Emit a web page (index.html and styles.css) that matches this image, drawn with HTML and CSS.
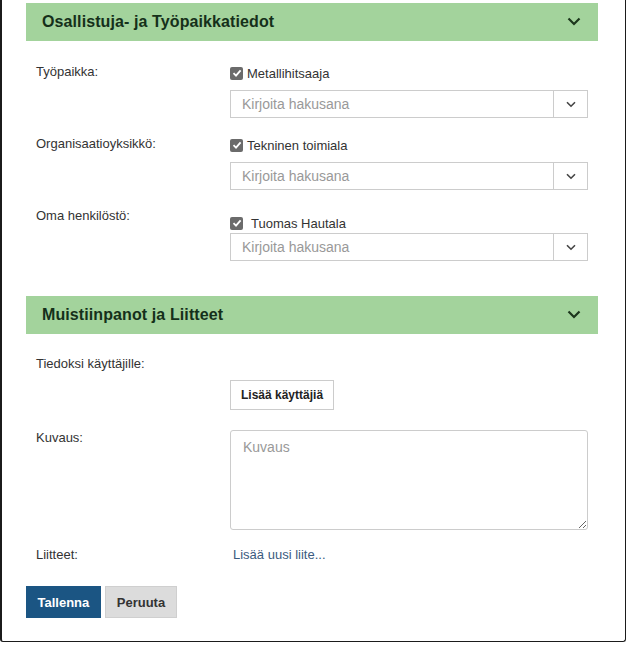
FILE: index.html
```html
<!DOCTYPE html>
<html lang="fi">
<head>
<meta charset="utf-8">
<title>Lomake</title>
<link rel="stylesheet" href="styles.css">
</head>
<body>
<div class="modal">
  <div class="section-head">
    <h2>Osallistuja- ja Työpaikkatiedot</h2>
    <svg class="chev" width="14" height="9" viewBox="0 0 14 9"><path d="M1.5 1.5 L7 7 L12.5 1.5" fill="none" stroke="#1c361c" stroke-width="2.2"/></svg>
  </div>

  <div class="rows first">
    <div class="row">
      <div class="label lbl-check">Työpaikka:</div>
      <div class="field">
        <div class="checkline"><span class="cb"><svg width="12" height="12" viewBox="0 0 12 12"><path d="M2.5 6.2 L5 8.6 L9.6 3.4" fill="none" stroke="#fff" stroke-width="1.8"/></svg></span>Metallihitsaaja</div>
        <div class="select"><span class="ph">Kirjoita hakusana</span><span class="dd"><svg width="10" height="7" viewBox="0 0 10 7"><path d="M1 1.2 L5 5.2 L9 1.2" fill="none" stroke="#444" stroke-width="1.6"/></svg></span></div>
      </div>
    </div>
    <div class="row">
      <div class="label lbl-check">Organisaatioyksikkö:</div>
      <div class="field">
        <div class="checkline"><span class="cb"><svg width="12" height="12" viewBox="0 0 12 12"><path d="M2.5 6.2 L5 8.6 L9.6 3.4" fill="none" stroke="#fff" stroke-width="1.8"/></svg></span>Tekninen toimiala</div>
        <div class="select"><span class="ph">Kirjoita hakusana</span><span class="dd"><svg width="10" height="7" viewBox="0 0 10 7"><path d="M1 1.2 L5 5.2 L9 1.2" fill="none" stroke="#444" stroke-width="1.6"/></svg></span></div>
      </div>
    </div>
    <div class="row">
      <div class="label lbl-check">Oma henkilöstö:</div>
      <div class="field">
        <div class="checkline user"><span class="cb"><svg width="12" height="12" viewBox="0 0 12 12"><path d="M2.5 6.2 L5 8.6 L9.6 3.4" fill="none" stroke="#fff" stroke-width="1.8"/></svg></span>Tuomas Hautala</div>
        <div class="select"><span class="ph">Kirjoita hakusana</span><span class="dd"><svg width="10" height="7" viewBox="0 0 10 7"><path d="M1 1.2 L5 5.2 L9 1.2" fill="none" stroke="#444" stroke-width="1.6"/></svg></span></div>
      </div>
    </div>
  </div>

  <div class="section-head second">
    <h2>Muistiinpanot ja Liitteet</h2>
    <svg class="chev" width="14" height="9" viewBox="0 0 14 9"><path d="M1.5 1.5 L7 7 L12.5 1.5" fill="none" stroke="#1c361c" stroke-width="2.2"/></svg>
  </div>

  <div class="rows notes">
    <div class="row">
      <div class="label">Tiedoksi käyttäjille:</div>
      <div class="field pad-btn">
        <button class="btn-light" type="button">Lisää käyttäjiä</button>
      </div>
    </div>
    <div class="row row-desc">
      <div class="label lbl-top">Kuvaus:</div>
      <div class="field">
        <textarea class="textarea" placeholder="Kuvaus"></textarea>
      </div>
    </div>
    <div class="row row-att">
      <div class="label">Liitteet:</div>
      <div class="field"><a class="link" href="#">Lisää uusi liite...</a></div>
    </div>
  </div>

  <div class="actions">
    <button class="btn-primary" type="button">Tallenna</button>
    <button class="btn-default" type="button">Peruuta</button>
  </div>
</div>
</body>
</html>
```

FILE: styles.css
```css
html, body {
  margin: 0;
  padding: 0;
  background: #ffffff;
}
body {
  font-family: "Liberation Sans", Arial, sans-serif;
  color: #333;
  font-size: 13px;
  width: 628px;
  height: 645px;
  overflow: hidden;
}
.modal {
  width: 626px;
  height: 642px;
  box-sizing: border-box;
  border-left: 2px solid #1b1b1b;
  border-right: 1px solid #1b1b1b;
  border-bottom: 1px solid #1b1b1b;
  border-radius: 0 0 3px 3px;
  padding: 3px 27px 0 24px;
  background: #fff;
}
.section-head {
  height: 38px;
  background: #a3d39c;
  display: flex;
  align-items: center;
  justify-content: space-between;
  padding: 0 17px 0 16px;
}
.section-head h2 {
  margin: 0;
  font-size: 16px;
  font-weight: bold;
  color: #15301a;
  letter-spacing: 0.1px;
}
.section-head.second {
  margin-top: 35px;
}
.chev {
  display: block;
  margin-top: -2px;
}
.rows {
  padding: 0 10px;
}
.rows.first {
  padding-top: 22px;
  display: flex;
  flex-direction: column;
  gap: 17px;
}
.row {
  display: grid;
  grid-template-columns: 194px 1fr;
}
.label {
  line-height: 18px;
}
.lbl-check {
  padding-top: 0;
}
.checkline {
  height: 20px;
  display: flex;
  align-items: center;
  margin-bottom: 7px;
  color: #333;
}
.checkline.user {
  height: 20px;
  padding-top: 6px;
  margin-bottom: 0;
}
.checkline.user .cb {
  margin-right: 8px;
}
.cb {
  width: 13px;
  height: 13px;
  background: #6b6b6b;
  border-radius: 2px;
  display: inline-flex;
  align-items: center;
  justify-content: center;
  margin-right: 4px;
}
.cb svg {
  display: block;
}
.select {
  height: 28px;
  box-sizing: border-box;
  border: 1px solid #cccccc;
  display: flex;
  align-items: stretch;
  background: #fff;
}
.ph {
  flex: 1;
  font-size: 14px;
  color: #999;
  padding-left: 11px;
  display: flex;
  align-items: center;
}
.dd {
  width: 33px;
  border-left: 1px solid #cccccc;
  display: flex;
  align-items: center;
  justify-content: center;
}
.rows.notes {
  padding-top: 21px;
  display: flex;
  flex-direction: column;
}
.row-desc {
  margin-top: 20px;
}
.row-att {
  margin-top: 16px;
}
.pad-btn {
  padding-top: 25px;
}
.btn-light {
  font-family: "Liberation Sans", Arial, sans-serif;
  font-size: 12px;
  font-weight: bold;
  color: #222;
  background: #fff;
  border: 1px solid #cccccc;
  height: 30px;
  padding: 0 10px;
  margin: 0;
}
.textarea {
  display: block;
  width: 100%;
  height: 100px;
  box-sizing: border-box;
  border: 1px solid #cccccc;
  border-radius: 3px;
  font-family: "Liberation Sans", Arial, sans-serif;
  font-size: 14px;
  padding: 8px 12px;
  resize: vertical;
  margin: 0;
}
.textarea::placeholder {
  color: #999;
}
.lbl-top {
  line-height: 15px;
}
.link {
  color: #3b5b80;
  text-decoration: none;
  margin-left: 3px;
  line-height: 18px;
}
.actions {
  display: flex;
  gap: 4px;
  margin-top: 22px;
}
.btn-primary, .btn-default {
  font-family: "Liberation Sans", Arial, sans-serif;
  font-size: 13px;
  font-weight: bold;
  height: 32px;
  margin: 0;
  padding: 0 10.5px;
  border: 1px solid transparent;
}
.btn-default {
  padding: 0 11px;
}
.btn-primary {
  background: #1b5583;
  color: #fff;
  border-color: #1b5583;
}
.btn-default {
  background: #dcdcdc;
  color: #333;
  border-color: #cfcfcf;
}
```
